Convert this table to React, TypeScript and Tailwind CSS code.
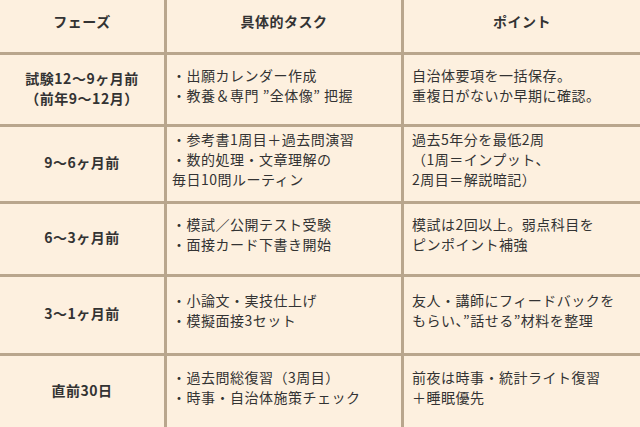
const rows = [
  {
    phase: ["試験12～9ヶ月前", "（前年9～12月）"],
    tasks: ["・出願カレンダー作成", "・教養＆専門 ”全体像” 把握"],
    points: ["自治体要項を一括保存。", "重複日がないか早期に確認。"],
  },
  {
    phase: ["9～6ヶ月前"],
    tasks: ["・参考書1周目＋過去問演習", "・数的処理・文章理解の", "毎日10問ルーティン"],
    points: ["過去5年分を最低2周", "（1周＝インプット、", "2周目＝解説暗記）"],
  },
  {
    phase: ["6～3ヶ月前"],
    tasks: ["・模試／公開テスト受験", "・面接カード下書き開始"],
    points: ["模試は2回以上。弱点科目を", "ピンポイント補強"],
  },
  {
    phase: ["3～1ヶ月前"],
    tasks: ["・小論文・実技仕上げ", "・模擬面接3セット"],
    points: ["友人・講師にフィードバックを", "もらい、”話せる”材料を整理"],
  },
  {
    phase: ["直前30日"],
    tasks: ["・過去問総復習（3周目）", "・時事・自治体施策チェック"],
    points: ["前夜は時事・統計ライト復習", "＋睡眠優先"],
  },
]

function Lines({ lines }: { lines: string[] }) {
  return (
    <>
      {lines.map((l, i) => (
        <div key={i}>{l}</div>
      ))}
    </>
  )
}

export default function App() {
  return (
    <div
      className="w-[640px] h-[427px] overflow-hidden bg-[#b9a68d] text-[#333] text-[14px] leading-[20px] tracking-[0.5px]"
      style={{ fontFamily: '"Noto Sans CJK JP", "Noto Sans", sans-serif' }}
    >
      <div className="grid grid-cols-[164px_234px_236px] grid-rows-[52px_69px_74px_70px_76px_71px] gap-[3px]">
        {/* header */}
        <div className="bg-[#fdf0df] flex items-center justify-center pb-[10px] font-bold">フェーズ</div>
        <div className="bg-[#fdf0df] flex items-center justify-center pb-[10px] font-bold">具体的タスク</div>
        <div className="bg-[#fdf0df] flex items-center justify-center pb-[10px] font-bold">ポイント</div>

        {rows.map((r, i) => (
          <div key={i} className="contents">
            <div className="bg-[#fdf0df] flex flex-col items-center justify-center pb-[4px] font-bold text-center">
              <Lines lines={r.phase} />
            </div>
            <div className="bg-[#fdf0df] flex flex-col justify-center pl-[5px] pb-[10px]">
              <Lines lines={r.tasks} />
            </div>
            <div className="bg-[#fdf0df] flex flex-col justify-center pl-[8px] pb-[10px]">
              <Lines lines={r.points} />
            </div>
          </div>
        ))}
      </div>
    </div>
  )
}
